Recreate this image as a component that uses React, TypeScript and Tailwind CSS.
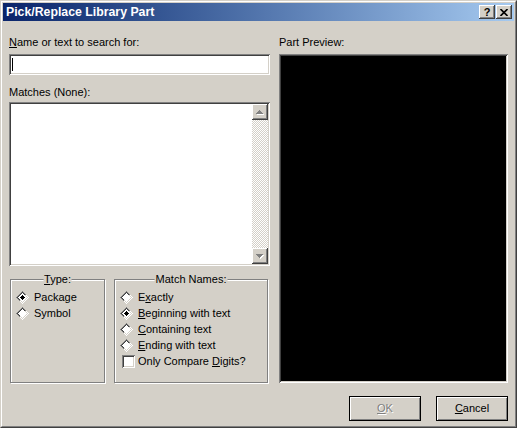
import React from 'react';

const raised =
  'bg-[#d4d0c8] shadow-[inset_-1px_-1px_0_#404040,inset_1px_1px_0_#ffffff,inset_-2px_-2px_0_#808080,inset_2px_2px_0_#d4d0c8]';
const sunken =
  'shadow-[inset_1px_1px_0_#808080,inset_-1px_-1px_0_#ffffff,inset_2px_2px_0_#404040,inset_-2px_-2px_0_#d4d0c8]';

/** Classic diamond radio, drawn pixel by pixel; shaded like the round one (dark upper-left, light lower-right) */
const Diamond = ({ checked }: { checked?: boolean }) => {
  const px: React.ReactNode[] = [];
  for (let r = 0; r <= 12; r++) {
    const hw = 6 - Math.abs(r - 6);
    for (let x = 6 - hw; x <= 6 + hw; x++) {
      const dist = Math.abs(r - 6) + Math.abs(x - 6);
      const dark = x + r <= 12;
      let fill = '#ffffff';
      if (dist === 6) fill = dark ? '#808080' : '#ffffff';
      else if (dist === 5) fill = dark ? '#404040' : '#d4d0c8';
      if (checked && dist <= 2) fill = '#000000';
      px.push(<rect key={`${r}-${x}`} x={x} y={r} width="1" height="1" fill={fill} />);
    }
  }
  return (
    <svg width="13" height="13" viewBox="0 0 13 13" shapeRendering="crispEdges" className="shrink-0">
      {px}
    </svg>
  );
};

const Radio = ({ checked, children }: { checked?: boolean; children: React.ReactNode }) => (
  <div className="flex items-center h-4">
    <Diamond checked={checked} />
    <span className="ml-[5px]">{children}</span>
  </div>
);

const GroupBox = ({ title, className, children }: { title: React.ReactNode; className: string; children: React.ReactNode }) => (
  <div
    className={`relative h-[104px] border border-[#808080] shadow-[inset_1px_1px_0_#ffffff,1px_1px_0_#ffffff] pt-[9px] pl-[5px] ${className}`}
  >
    <span className="absolute -top-[7px] left-1/2 -translate-x-1/2 bg-[#d4d0c8] px-[1px] whitespace-nowrap">
      {title}
    </span>
    {children}
  </div>
);

const ScrollArrow = ({ up }: { up?: boolean }) => (
  <div className={`w-4 h-4 flex items-center justify-center ${raised}`}>
    <svg width="8" height="5" viewBox="0 0 8 5" shapeRendering="crispEdges">
      {up ? (
        <>
          <polygon points="4,1 8,5 1,5" fill="#ffffff" />
          <polygon points="3.5,0 7,4 0,4" fill="#808080" />
        </>
      ) : (
        <>
          <polygon points="1,1 8,1 4.5,5" fill="#ffffff" />
          <polygon points="0,0 7,0 3.5,4" fill="#808080" />
        </>
      )}
    </svg>
  </div>
);

export default function App() {
  return (
    <div className="w-[517px] h-[428px] bg-[#d4d0c8] border border-t-[#d4d0c8] border-l-[#d4d0c8] border-b-[#404040] border-r-[#404040] font-['Liberation_Sans',Arial,sans-serif] text-[11px] leading-[13px] text-black">
      <div className="h-full border border-t-white border-l-white border-b-[#808080] border-r-[#808080] p-[1px] flex flex-col">
        {/* title bar */}
        <div className="h-[18px] flex items-center justify-between pl-[3px] pr-[2px] bg-gradient-to-r from-[#0a246a] to-[#a6caf0]">
          <span className="text-white font-bold text-[12.3px] leading-[16px]">Pick/Replace Library Part</span>
          <div className="flex gap-[1px]">
            <div className={`w-4 h-[14px] flex items-center justify-center font-bold text-[11px] leading-none ${raised}`}>?</div>
            <div className={`w-4 h-[14px] flex items-center justify-center ${raised}`}>
              <svg width="8" height="7" viewBox="0 0 8 7">
                <path d="M0.5 0 L7.5 7 M7.5 0 L0.5 7" stroke="#000" strokeWidth="1.6" />
              </svg>
            </div>
          </div>
        </div>

        {/* body */}
        <div className="flex gap-[9px] px-[6px] pt-[15px]">
          <div className="w-[261px] flex flex-col">
            <span>
              <u>N</u>ame or text to search for:
            </span>
            <div className={`mt-[5px] h-[21px] bg-white flex items-center ${sunken}`}>
              <span className="ml-[3px] w-px h-[13px] bg-black" />
            </div>
            <span className="mt-[11px]">Matches (None):</span>
            <div className={`mt-[3px] h-[164px] bg-white p-[2px] flex justify-end ${sunken}`}>
              <div className="w-4 flex flex-col">
                <ScrollArrow up />
                <div className="flex-1 bg-[repeating-conic-gradient(#d4d0c8_0_25%,#ffffff_0_50%)] bg-[length:2px_2px]" />
                <ScrollArrow />
              </div>
            </div>
            <div className="mt-[13px] flex gap-[9px] pl-[1px]">
              <GroupBox title={<><u>T</u>ype:</>} className="w-[95px]">
                <Radio checked>Package</Radio>
                <Radio>Symbol</Radio>
              </GroupBox>
              <GroupBox title="Match Names:" className="w-[154px]">
                <Radio>
                  E<u>x</u>actly
                </Radio>
                <Radio checked>
                  <u>B</u>eginning with text
                </Radio>
                <Radio>
                  <u>C</u>ontaining text
                </Radio>
                <Radio>
                  <u>E</u>nding with text
                </Radio>
                <div className="flex items-center h-4">
                  <span className={`ml-[2px] w-[13px] h-[13px] bg-white ${sunken}`} />
                  <span className="ml-[3px]">
                    Only Compare <u>D</u>igits?
                  </span>
                </div>
              </GroupBox>
            </div>
          </div>

          <div className="w-[229px] flex flex-col">
            <span>Part Preview:</span>
            <div className={`mt-[5px] h-[329px] bg-black ${sunken}`} />
          </div>
        </div>

        {/* buttons */}
        <div className="mt-[13px] flex justify-end gap-[15px] px-[6px]">
          <button
            type="button"
            disabled
            className="w-[72px] h-[25px] border border-black bg-[#d4d0c8] shadow-[inset_1px_1px_0_#ffffff,inset_-1px_-1px_0_#808080] text-[#808080] [text-shadow:1px_1px_0_#ffffff]"
          >
            <u>O</u>K
          </button>
          <button
            type="button"
            className="w-[72px] h-[25px] border border-black bg-[#d4d0c8] shadow-[inset_1px_1px_0_#ffffff,inset_-1px_-1px_0_#808080]"
          >
            <u>C</u>ancel
          </button>
        </div>
      </div>
    </div>
  );
}
